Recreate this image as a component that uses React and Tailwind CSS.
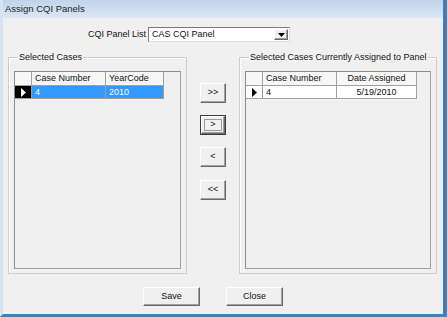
import React from "react";

const raised =
    "bg-[#f0f0f0] border border-t-white border-l-white border-b-[#696969] border-r-[#696969] shadow-[inset_-1px_-1px_0_#a0a0a0]";

const Arrow = ({ color }) => (
    <svg width="5" height="9" viewBox="0 0 5 9">
        <path d="M0 0 L5 4.5 L0 9 Z" fill={color} />
    </svg>
);

const Grid = ({ cols, row, selected, className }) => (
    <div
        className={`flex flex-col bg-[#f0f0f0] border border-t-[#8c8c8c] border-l-[#8c8c8c] border-b-[#a0a0a0] border-r-[#a0a0a0] ${className}`}
    >
        {/* header */}
        <div className="flex h-[14px]">
            <div className="w-[17px] bg-[#f7f7f7] border-r border-b border-[#a0a0a0]" />
            {cols.map((c) => (
                <div
                    key={c.label}
                    style={{ width: c.width }}
                    className={`bg-[#f7f7f7] border-r border-b border-[#a0a0a0] px-[3px] leading-[13px] ${c.center ? "text-center" : ""}`}
                >
                    {c.label}
                </div>
            ))}
        </div>
        {/* row */}
        <div className="flex h-[13px]">
            <div
                className={`w-[17px] flex items-center justify-center border-r border-b border-[#a0a0a0] ${selected ? "bg-black" : "bg-white"}`}
            >
                <Arrow color={selected ? "#ffffff" : "#000000"} />
            </div>
            {cols.map((c, i) => (
                <div
                    key={c.label}
                    style={{ width: c.width }}
                    className={`border-r border-b border-[#a0a0a0] px-[3px] leading-[12px] ${selected ? "bg-[#3399ff] text-white" : "bg-white"} ${c.center ? "text-center" : ""}`}
                >
                    {row[i]}
                </div>
            ))}
        </div>
    </div>
);

const SmallButton = ({ label, focused }) => (
    <div
        className={`w-[26px] h-[20px] flex items-center justify-center ${focused ? "border border-[#3c3c3c]" : ""}`}
    >
        <div
            className={`${raised} w-full h-full flex items-center justify-center ${focused ? "outline outline-1 outline-[#9a9a9a] -outline-offset-4" : ""}`}
        >
            {label}
        </div>
    </div>
);

export default function App() {
    return (
        <div
            className="w-[447px] h-[317px] flex flex-col overflow-hidden bg-[#f0f0f0] text-[9px] text-[#111] whitespace-nowrap border-l-[3px] border-l-[#d7e3f1] border-r-[4px] border-r-[#3f7fb5] border-b-[3px] border-b-[#2d8bbd]"
            style={{ fontFamily: '"Liberation Sans", Arial, sans-serif' }}
        >
            {/* Title bar */}
            <div className="h-[18px] shrink-0 flex items-center pl-[2px] bg-gradient-to-b from-[#bfd4ea] to-[#dbe7f4] text-[9.5px] text-[#1b1b1b]">
                Assign CQI Panels
            </div>

            {/* Combo row */}
            <div className="flex items-center mt-[9px] h-[15px] shrink-0">
                <span className="ml-[85px] mr-[2px]">CQI Panel List</span>
                <div className="w-[142px] h-[15px] bg-white border border-t-[#7a7a7a] border-l-[#7a7a7a] border-b-[#dcdcdc] border-r-[#dcdcdc] flex items-center">
                    <span className="pl-[3px] flex-1 leading-[13px]">CAS CQI Panel</span>
                    <div className={`${raised} w-[14px] h-[11px] mr-[1px] flex items-center justify-center`}>
                        <svg width="7" height="4" viewBox="0 0 7 4">
                            <path d="M0 0 L7 0 L3.5 4 Z" fill="#000" />
                        </svg>
                    </div>
                </div>
            </div>

            {/* Panels */}
            <div className="flex mt-[10px] h-[222px] shrink-0">
                <fieldset className="ml-[5px] w-[179px] h-[222px] border border-[#cdcdcd] shadow-[inset_1px_1px_0_#fff] px-[5px] pb-[4px]">
                    <legend className="ml-[4px] px-[1px] leading-[11px]">Selected Cases</legend>
                    <Grid
                        className="mt-[8px] h-[198px]"
                        selected
                        cols={[
                            { label: "Case Number", width: 74 },
                            { label: "YearCode", width: 58 },
                        ]}
                        row={["4", "2010"]}
                    />
                </fieldset>

                <div className="w-[52px] flex flex-col items-start pl-[13px] pt-[31px] gap-[12px]">
                    <SmallButton label=">>" />
                    <SmallButton label=">" focused />
                    <SmallButton label="<" />
                    <div className="mt-[1px]">
                        <SmallButton label="<<" />
                    </div>
                </div>

                <fieldset className="w-[198px] h-[222px] border border-[#cdcdcd] shadow-[inset_1px_1px_0_#fff] px-[5px] pb-[4px]">
                    <legend className="ml-[4px] px-[1px] leading-[11px]">
                        Selected Cases Currently Assigned to Panel
                    </legend>
                    <Grid
                        className="mt-[8px] h-[198px]"
                        cols={[
                            { label: "Case Number", width: 74 },
                            { label: "Date Assigned", width: 80, center: true },
                        ]}
                        row={["4", "5/19/2010"]}
                    />
                </fieldset>
            </div>

            {/* Bottom buttons */}
            <div className="flex mt-[13px] ml-[140px] gap-[26px]">
                <div className={`${raised} w-[57px] h-[19px] flex items-center justify-center`}>Save</div>
                <div className={`${raised} w-[57px] h-[19px] flex items-center justify-center`}>Close</div>
            </div>
        </div>
    );
}
